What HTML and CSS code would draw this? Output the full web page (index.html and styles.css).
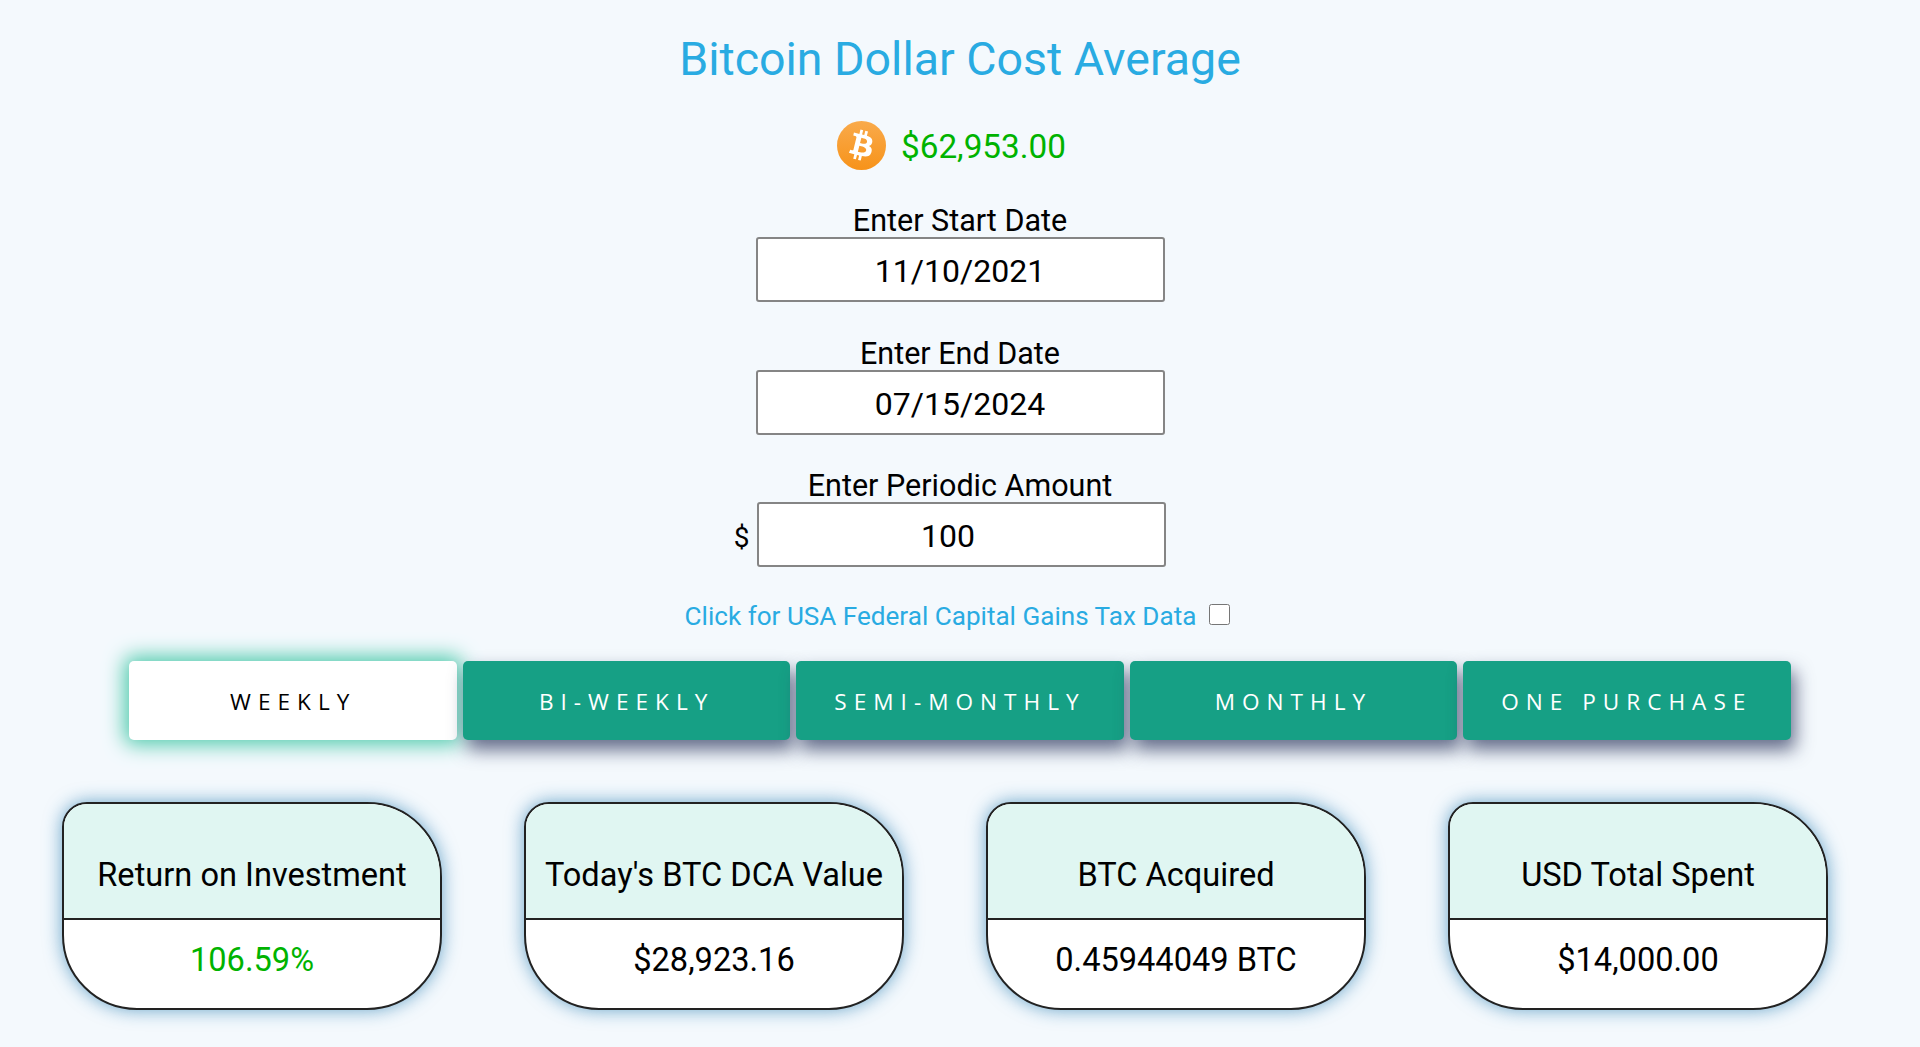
FILE: index.html
```html
<!DOCTYPE html>
<html lang="en">
<head>
    <meta charset="UTF-8">
    <meta name="viewport" content="width=device-width, initial-scale=1.0">
    <title>Bitcoin Dollar Cost Average</title>
    <link rel="stylesheet" href="styles.css">
</head>
<body>
    <h1 class="title">Bitcoin Dollar Cost Average</h1>

    <div class="price-row">
        <svg class="btc-logo" viewBox="0 0 64 64" aria-label="Bitcoin">
            <defs>
                <linearGradient id="coin" x1="0" y1="0" x2="0" y2="1">
                    <stop offset="0" stop-color="#f9aa4b"/>
                    <stop offset="1" stop-color="#f7931a"/>
                </linearGradient>
            </defs>
            <circle cx="32" cy="32" r="32" fill="url(#coin)"/>
            <path fill="#fff" d="M46.1 27.441c.636-4.258-2.606-6.547-7.039-8.074l1.438-5.768-3.512-.875-1.4 5.616c-.922-.23-1.87-.447-2.812-.662l1.41-5.653-3.509-.875-1.439 5.766c-.764-.174-1.514-.346-2.242-.527l.004-.018-4.842-1.209-.934 3.75s2.605.597 2.55.634c1.422.355 1.68 1.296 1.636 2.042l-1.638 6.571c.098.025.225.061.365.117l-.37-.092-2.297 9.205c-.174.432-.615 1.08-1.609.834.035.051-2.552-.637-2.552-.637l-1.743 4.02 4.57 1.139c.85.213 1.683.436 2.502.646l-1.453 5.835 3.507.875 1.44-5.772c.957.26 1.887.5 2.797.726L27.504 50.8l3.511.875 1.453-5.823c5.987 1.133 10.489.676 12.384-4.739 1.527-4.36-.076-6.875-3.226-8.515 2.294-.529 4.022-2.038 4.483-5.155zM38.08 38.69c-1.085 4.36-8.426 2.003-10.806 1.412l1.928-7.729c2.38.594 10.012 1.77 8.878 6.317zm1.086-11.312c-.99 3.966-7.1 1.951-9.082 1.457l1.748-7.01c1.982.494 8.365 1.416 7.334 5.553z"/>
        </svg>
        <span class="price">$62,953.00</span>
    </div>

    <form class="dca-form">
        <div class="field">
            <label for="startDate">Enter Start Date</label>
            <div class="field-row">
                <input type="text" id="startDate" class="field-input" value="11/10/2021">
            </div>
        </div>
        <div class="field">
            <label for="endDate">Enter End Date</label>
            <div class="field-row">
                <input type="text" id="endDate" class="field-input" value="07/15/2024">
            </div>
        </div>
        <div class="field">
            <label for="amount">Enter Periodic Amount</label>
            <div class="field-row">
                <span class="currency">$</span>
                <input type="text" id="amount" class="field-input amount-input" value="100">
            </div>
        </div>
        <div class="tax-row">
            <label for="taxData">Click for USA Federal Capital Gains Tax Data</label>
            <input type="checkbox" id="taxData" class="tax-check">
        </div>
    </form>

    <div class="period-tabs">
        <button class="period-tab active">WEEKLY</button>
        <button class="period-tab">BI-WEEKLY</button>
        <button class="period-tab">SEMI-MONTHLY</button>
        <button class="period-tab">MONTHLY</button>
        <button class="period-tab">ONE PURCHASE</button>
    </div>

    <div class="results">
        <div class="result-card">
            <div class="result-head">Return on Investment</div>
            <div class="result-value gain">106.59%</div>
        </div>
        <div class="result-card">
            <div class="result-head">Today's BTC DCA Value</div>
            <div class="result-value">$28,923.16</div>
        </div>
        <div class="result-card">
            <div class="result-head">BTC Acquired</div>
            <div class="result-value">0.45944049 BTC</div>
        </div>
        <div class="result-card">
            <div class="result-head">USD Total Spent</div>
            <div class="result-value">$14,000.00</div>
        </div>
    </div>
</body>
</html>
```

FILE: styles.css
```css
html {
    height: 100%;
}

body {
    margin: 0;
    min-height: 100%;
    background-color: #f4f9fd;
    color: #000;
    font-family: Roboto, "Noto Sans", sans-serif;
    overflow: hidden;
}

.title {
    margin: 0;
    padding-top: 31px;
    height: 91px;
    box-sizing: border-box;
    line-height: 56px;
    font-size: 46.5px;
    font-weight: 400;
    text-align: center;
    color: #29abe2;
}

.price-row {
    display: flex;
    align-items: center;
    justify-content: center;
    gap: 15px;
    height: 50px;
    margin-top: 30px;
    padding-right: 17px;
}

.btc-logo {
    width: 49px;
    height: 49px;
    margin-bottom: 2px;
}

.price {
    font-size: 33.3px;
    color: #00b300;
}

.dca-form {
    margin-top: 31px;
}

.field {
    margin-bottom: 32.5px;
    text-align: center;
}

.field label {
    display: block;
    height: 35px;
    line-height: 37px;
    font-size: 30.5px;
}

.field-row {
    display: grid;
    grid-template-columns: 1fr 409px 1fr;
    align-items: center;
}

.field-input {
    grid-column: 2;
    box-sizing: border-box;
    height: 65px;
    width: 409px;
    padding: 3px 0 0;
    border: 2px solid #858585;
    border-radius: 3px;
    background: #fff;
    font-family: inherit;
    font-size: 32px;
    text-align: center;
    color: #000;
}

.amount-input {
    padding-right: 26px;
    margin-left: 1px;
}

.currency {
    justify-self: end;
    margin: 5px 6px 0 0;
    font-size: 28px;
}

.tax-row {
    display: flex;
    align-items: center;
    justify-content: center;
    gap: 13px;
    height: 42px;
    margin-top: -5px;
    padding-right: 5px;
    font-size: 26.1px;
    color: #29abe2;
}

.tax-check {
    width: 21px;
    height: 21px;
    margin: 0 0 3px;
}

.period-tabs {
    display: flex;
    justify-content: center;
    gap: 5.8px;
    margin-top: 24px;
}

.period-tab {
    width: 327.6px;
    height: 79px;
    padding-top: 3px;
    border: none;
    border-radius: 5px;
    background-color: #16a085;
    color: #fff;
    font-family: "Open Sans", sans-serif;
    font-size: 22.6px;
    letter-spacing: 7px;
    box-shadow: 4px 10px 18px rgba(40, 50, 90, 0.7);
}

.period-tab.active {
    background-color: #fff;
    color: #000;
    box-shadow: 0 0 20px 5px #52cbae;
}

.results {
    display: flex;
    justify-content: space-between;
    padding: 0 92px 0 62px;
    margin-top: 62px;
}

.result-card {
    box-sizing: border-box;
    width: 380px;
    height: 208px;
    border: 2px solid #222;
    border-radius: 25px 75px 75px 75px;
    background: #fff;
    overflow: hidden;
    box-shadow: 0 0 18px rgba(30, 120, 175, 0.65);
    text-align: center;
    font-size: 32.6px;
}

.result-head {
    box-sizing: border-box;
    height: 116px;
    padding-top: 49px;
    line-height: 44px;
    border-bottom: 2px solid #222;
    background-color: #e0f6f2;
}

.result-value {
    padding-top: 18px;
    line-height: 44px;
}

.gain {
    color: #00b300;
}
```
